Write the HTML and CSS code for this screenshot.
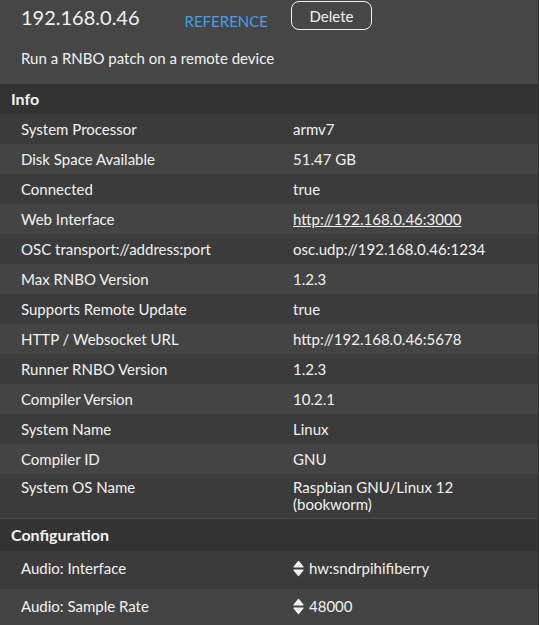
FILE: index.html
```html
<!DOCTYPE html>
<html lang="en">
<head>
  <meta charset="UTF-8">
  <meta name="viewport" content="width=device-width, initial-scale=1.0">
  <title>Runner - 192.168.0.46</title>
  <link rel="stylesheet" href="styles.css">
</head>
<body>
  <div class="device">
    <div class="device-head">
      <h2 class="device-ip">192.168.0.46</h2>
      <span class="device-tag">REFERENCE</span>
      <button class="btn-delete" type="button">Delete</button>
    </div>
    <p class="device-desc">Run a RNBO patch on a remote device</p>

    <h3 class="section-title">Info</h3>
    <div class="props">
      <div class="prop"><span class="prop-name">System Processor</span><span class="prop-value">armv7</span></div>
      <div class="prop"><span class="prop-name">Disk Space Available</span><span class="prop-value">51.47 GB</span></div>
      <div class="prop"><span class="prop-name">Connected</span><span class="prop-value">true</span></div>
      <div class="prop"><span class="prop-name">Web Interface</span><span class="prop-value"><a href="#">http://192.168.0.46:3000</a></span></div>
      <div class="prop"><span class="prop-name">OSC transport://address:port</span><span class="prop-value">osc.udp://192.168.0.46:1234</span></div>
      <div class="prop"><span class="prop-name">Max RNBO Version</span><span class="prop-value">1.2.3</span></div>
      <div class="prop"><span class="prop-name">Supports Remote Update</span><span class="prop-value">true</span></div>
      <div class="prop"><span class="prop-name">HTTP / Websocket URL</span><span class="prop-value">http://192.168.0.46:5678</span></div>
      <div class="prop"><span class="prop-name">Runner RNBO Version</span><span class="prop-value">1.2.3</span></div>
      <div class="prop"><span class="prop-name">Compiler Version</span><span class="prop-value">10.2.1</span></div>
      <div class="prop"><span class="prop-name">System Name</span><span class="prop-value">Linux</span></div>
      <div class="prop"><span class="prop-name">Compiler ID</span><span class="prop-value">GNU</span></div>
      <div class="prop prop-wrap"><span class="prop-name">System OS Name</span><span class="prop-value">Raspbian GNU/Linux 12<br>(bookworm)</span></div>
    </div>

    <h3 class="section-title section-config">Configuration</h3>
    <div class="props">
      <div class="prop prop-select">
        <span class="prop-name">Audio: Interface</span>
        <span class="prop-value">
          <span class="select">
            <svg class="select-arrows" width="11" height="17" viewBox="0 0 11 17"><path d="M1 7 L5.5 1.5 L10 7 Z M1 10 L5.5 15.5 L10 10 Z" fill="#f2f2f2" stroke="#f2f2f2" stroke-width="1.2" stroke-linejoin="round"/></svg>
            hw:sndrpihifiberry
          </span>
        </span>
      </div>
      <div class="prop prop-select">
        <span class="prop-name">Audio: Sample Rate</span>
        <span class="prop-value">
          <span class="select">
            <svg class="select-arrows" width="11" height="17" viewBox="0 0 11 17"><path d="M1 7 L5.5 1.5 L10 7 Z M1 10 L5.5 15.5 L10 10 Z" fill="#f2f2f2" stroke="#f2f2f2" stroke-width="1.2" stroke-linejoin="round"/></svg>
            48000
          </span>
        </span>
      </div>
    </div>
  </div>
</body>
</html>
```

FILE: styles.css
```css
html, body {
  margin: 0;
  padding: 0;
  background: #464646;
}
body {
  font-family: Lato, "Open Sans", sans-serif;
  font-size: 15px;
  color: #f2f2f2;
}
.device {
  border-right: 1px solid #2a2a2a;
  min-height: 625px;
  box-sizing: border-box;
}
.device-head {
  display: flex;
  align-items: flex-start;
  padding: 1px 0 0 21px;
}
.device-ip {
  margin: 4px 0 0;
  font-size: 20px;
  font-weight: 400;
  line-height: 24px;
}
.device-tag {
  margin: 11px 0 0 45px;
  font-size: 15px;
  line-height: 18px;
  color: #42a0e6;
}
.btn-delete {
  margin-left: 23px;
  width: 81px;
  height: 29px;
  padding: 0;
  background: transparent;
  border: 1px solid #f2f2f2;
  border-radius: 8px;
  color: #f2f2f2;
  font-family: inherit;
  font-size: 15px;
  line-height: 18px;
  cursor: pointer;
}
.device-desc {
  margin: 20px 0 0 21px;
  line-height: 17px;
  height: 34px;
}
.section-title {
  margin: 0;
  background: #333333;
  padding: 5px 11px;
  font-size: 16px;
  font-weight: 700;
  line-height: 20px;
}
.section-config {
  border-top: 1px solid #4a4a4a;
  padding: 6px 11px 6px;
}
.prop {
  display: grid;
  grid-template-columns: 272px 1fr;
  align-items: start;
  padding: 6.5px 10px 6.5px 21px;
  line-height: 17px;
}
.prop:nth-child(odd) {
  background: #3b3b3b;
}
.prop:nth-child(even) {
  background: #444444;
}
.prop-wrap {
  padding: 5px 10px 5px 21px;
}
.prop-select {
  padding: 9px 10px 9px 21px;
}
.prop-value a {
  color: inherit;
  text-decoration: underline;
}
.select {
  display: inline-flex;
  align-items: center;
  gap: 5px;
}
.select-arrows {
  display: block;
}
```
